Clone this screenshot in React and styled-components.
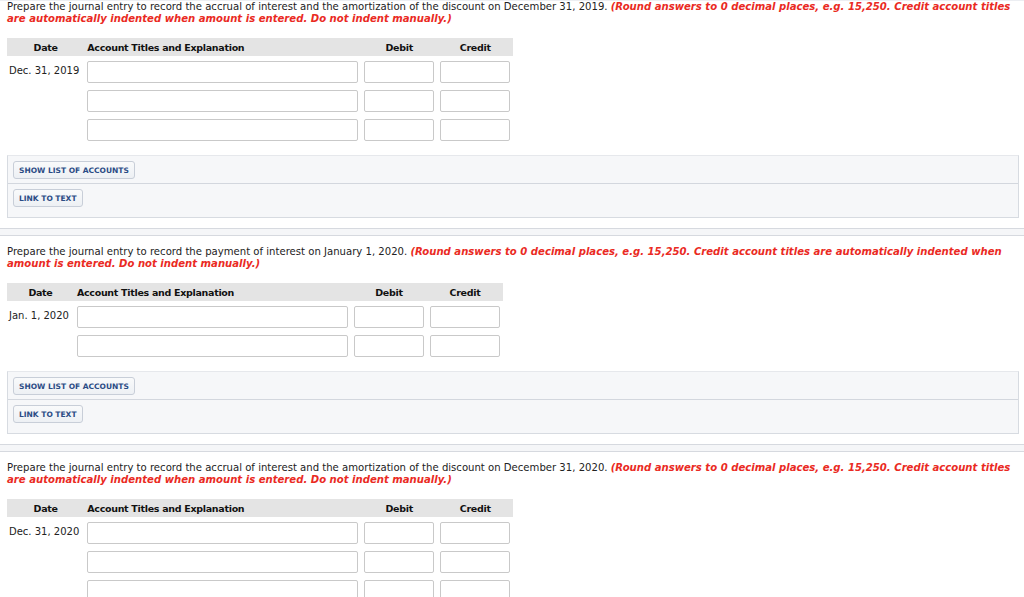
import React from 'react'
import styled, { createGlobalStyle } from 'styled-components'

const GlobalStyle = createGlobalStyle`
  body {
    margin: 0;
    background: #fff;
    font-family: "DejaVu Sans", Verdana, sans-serif;
    font-size: 10px;
    color: #222;
  }
`

const RED_NOTE =
  '(Round answers to 0 decimal places, e.g. 15,250. Credit account titles are automatically indented when amount is entered. Do not indent manually.)'

const sections = [
  {
    prompt: 'Prepare the journal entry to record the accrual of interest and the amortization of the discount on December 31, 2019.',
    date: 'Dec. 31, 2019',
    rows: 3
  },
  {
    prompt: 'Prepare the journal entry to record the payment of interest on January 1, 2020.',
    date: 'Jan. 1, 2020',
    rows: 2
  },
  {
    prompt: 'Prepare the journal entry to record the accrual of interest and the amortization of the discount on December 31, 2020.',
    date: 'Dec. 31, 2020',
    rows: 3
  }
]

function App() {
  return (
    <Page>
      <GlobalStyle />
      {sections.map((s, i) => (
        <React.Fragment key={i}>
          {i > 0 && <Band />}
          <Section first={i === 0}>
            <Prompt>
              {s.prompt} <Note>{RED_NOTE}</Note>
            </Prompt>

            <Journal>
              <thead>
                <tr>
                  <HeadCell>Date</HeadCell>
                  <HeadCell align="left">Account Titles and Explanation</HeadCell>
                  <HeadCell>Debit</HeadCell>
                  <HeadCell>Credit</HeadCell>
                </tr>
              </thead>
              <tbody>
                {Array.from({ length: s.rows }).map((_, r) => (
                  <tr key={r}>
                    <DateCell>{r === 0 ? s.date : ''}</DateCell>
                    <Cell><Field wide /></Cell>
                    <Cell><Field /></Cell>
                    <Cell><Field /></Cell>
                  </tr>
                ))}
              </tbody>
            </Journal>

            {i < 2 && (
              <Tools>
                <ToolRow>
                  <ToolButton>Show List of Accounts</ToolButton>
                </ToolRow>
                <ToolRow last>
                  <ToolButton>Link to Text</ToolButton>
                </ToolRow>
              </Tools>
            )}
          </Section>
        </React.Fragment>
      ))}
    </Page>
  )
}

export default App

const Page = styled.div`
  width: 1024px;
  border-top: 1px solid #eceef2;
`

const Section = styled.div`
  padding: ${p => (p.first ? '0' : '10px')} 5px 10px 7px;
`

const Prompt = styled.p`
  margin: 0;
  line-height: 12px;
  font-size: 10.1px;
`

const Note = styled.span`
  color: #ea2a23;
  font-weight: bold;
  font-style: italic;
`

const Journal = styled.table`
  margin-top: 13px;
  border-collapse: collapse;
  border-spacing: 0;
`

const HeadCell = styled.th`
  height: 18px;
  padding: 0 3px;
  background: #e4e4e4;
  font-size: 9.5px;
  letter-spacing: -0.3px;
  font-weight: bold;
  color: #111;
  text-align: ${p => p.align || 'center'};
  white-space: nowrap;
`

const Cell = styled.td`
  padding: 5px 3px 2px;
  vertical-align: top;
  line-height: 0;
`

const DateCell = styled.td`
  padding: 5px 5px 2px 2px;
  vertical-align: top;
  white-space: nowrap;
  line-height: 20px;
  color: #222;
`

const Field = styled.input.attrs({ type: 'text' })`
  display: block;
  box-sizing: border-box;
  width: ${p => (p.wide ? '271px' : '70px')};
  height: 22px;
  margin: 0;
  padding: 2px 4px;
  border: 1px solid #c9c9c9;
  border-radius: 2px;
  background: #fff;
  font: inherit;
`

const Tools = styled.div`
  margin-top: 12px;
  background: #f6f7f9;
  border: 1px solid #d7dbe1;
  border-top-color: #e6e8ec;
`

const ToolRow = styled.div`
  padding: ${p => (p.last ? '5px 5px 10px' : '5px 5px 4px')};
  border-bottom: ${p => (p.last ? 'none' : '1px solid #d3d7de')};
`

const ToolButton = styled.button`
  display: block;
  height: 18px;
  padding: 0 5px;
  border: 1px solid #c8ced8;
  border-radius: 3px;
  background: linear-gradient(#f9fafb, #edf0f4);
  color: #2b4c85;
  font-family: "DejaVu Sans", Verdana, sans-serif;
  font-size: 7.5px;
  font-weight: bold;
  text-transform: uppercase;
  cursor: pointer;
`

const Band = styled.div`
  height: 6px;
  background: #f5f6f8;
  border-top: 1px solid #d6d9df;
  border-bottom: 1px solid #d6d9df;
`
